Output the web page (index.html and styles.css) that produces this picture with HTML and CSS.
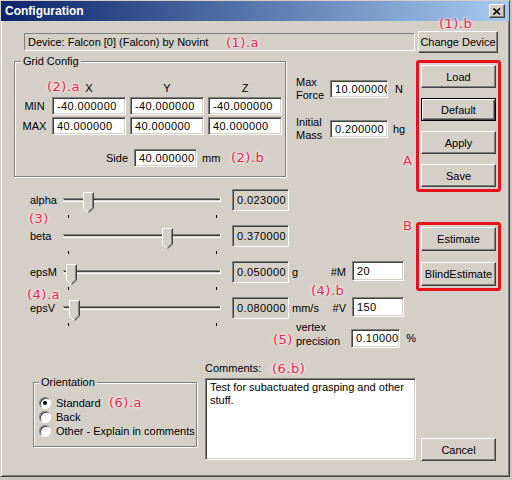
FILE: index.html
```html
<!doctype html>
<html lang="en">

<head>
  <title>Configuration</title>
  <meta charset="utf-8">
  <meta name="viewport" content="width=device-width, initial-scale=1">
  <link rel="stylesheet" href="styles.css">
</head>

<body>
  <!-- shared slider parts -->
  <svg class="defs" width="0" height="0">
    <defs>
      <g id="track">
        <path d="M1 9.5H159" stroke="#808080" />
        <path d="M2 10.5H158" stroke="#404040" />
        <path d="M1 12.5H159" stroke="#ffffff" />
        <path d="M158.5 9V13" stroke="#ffffff" />
        <path d="M6.5 26v3M154.5 26v3" stroke="#000000" />
      </g>
      <g id="thumb">
        <polygon points="0,0 11,0 11,16 5.5,21 0,16" fill="#d4d0c8" />
        <polyline points="0.5,16 0.5,0.5 10.5,0.5" fill="none" stroke="#ffffff" />
        <polyline points="0.5,16.2 5.5,20.6" fill="none" stroke="#ffffff" />
        <polyline points="10.5,0.5 10.5,16.2 5.5,20.6" fill="none" stroke="#404040" />
        <polyline points="9.5,1.5 9.5,15.8 5.5,19.4" fill="none" stroke="#808080" />
      </g>
    </defs>
  </svg>

  <div class="window">
    <div class="titlebar">
      <span class="title">Configuration</span>
      <span class="close">
        <svg width="8" height="7" viewBox="0 0 8 7">
          <path d="M0.5 0.5L7 6.5M7 0.5L0.5 6.5" stroke="#000" stroke-width="1.6" />
        </svg>
      </span>
    </div>

    <div class="client">
      <div class="device-row">
        <div class="device">Device: Falcon [0] (Falcon) by Novint</div>
        <button class="btn change">Change Device</button>
      </div>

      <div class="main">
        <div class="left">
          <div class="top-area">
            <fieldset class="group grid">
              <legend>Grid Config</legend>
              <div class="grid-table">
                <span></span>
                <span class="axis">X</span>
                <span class="axis">Y</span>
                <span class="axis">Z</span>
                <span class="row-label">MIN</span>
                <div class="field">-40.000000</div>
                <div class="field">-40.000000</div>
                <div class="field">-40.000000</div>
                <span class="row-label">MAX</span>
                <div class="field">40.000000</div>
                <div class="field">40.000000</div>
                <div class="field">40.000000</div>
              </div>
              <div class="side-row">
                <span>Side</span>
                <div class="field">40.000000</div>
                <span class="side-unit">mm</span>
              </div>
            </fieldset>

            <div class="physics">
              <div class="phys-row">
                <span class="phys-label">Max<br>Force</span>
                <div class="field">10.000000</div>
                <span class="phys-unit">N</span>
              </div>
              <div class="phys-row">
                <span class="phys-label">Initial<br>Mass</span>
                <div class="field">0.200000</div>
                <span class="phys-unit">hg</span>
              </div>
            </div>
          </div>

          <div class="sliders">
            <div class="slider-row">
              <span class="slider-label">alpha</span>
              <svg class="slider" width="160" height="22"><use href="#track" /><use href="#thumb" x="21" y="3" /></svg>
              <div class="value">0.023000</div>
            </div>
            <div class="slider-row">
              <span class="slider-label">beta</span>
              <svg class="slider" width="160" height="22"><use href="#track" /><use href="#thumb" x="100" y="3" /></svg>
              <div class="value">0.370000</div>
            </div>
            <div class="slider-row">
              <span class="slider-label">epsM</span>
              <svg class="slider" width="160" height="22"><use href="#track" /><use href="#thumb" x="4" y="3" /></svg>
              <div class="value">0.050000</div>
              <span class="value-unit">g</span>
              <span class="count-label">#M</span>
              <div class="field count">20</div>
            </div>
            <div class="slider-row">
              <span class="slider-label">epsV</span>
              <svg class="slider" width="160" height="22"><use href="#track" /><use href="#thumb" x="7" y="3" /></svg>
              <div class="value">0.080000</div>
              <span class="value-unit">mm/s</span>
              <span class="count-label">#V</span>
              <div class="field count">150</div>
            </div>
          </div>

          <div class="vertex-row">
            <span class="vertex-label">vertex<br>precision</span>
            <div class="field">0.10000</div>
            <span class="vertex-unit">%</span>
          </div>

          <div class="bottom-row">
            <fieldset class="group orientation">
              <legend>Orientation</legend>
              <div class="radio-row"><span class="radio checked"></span>Standard</div>
              <div class="radio-row"><span class="radio"></span>Back</div>
              <div class="radio-row"><span class="radio"></span>Other - Explain in comments</div>
            </fieldset>
            <div class="comments">
              <div class="comments-label">Comments:</div>
              <div class="comments-box">Test for subactuated grasping and other<br>stuff.</div>
            </div>
          </div>
        </div>

        <div class="right">
          <div class="redbox">
            <button class="btn">Load</button>
            <button class="btn btn-default">Default</button>
            <button class="btn">Apply</button>
            <button class="btn">Save</button>
          </div>
          <div class="redbox redbox-b">
            <button class="btn">Estimate</button>
            <button class="btn">BlindEstimate</button>
          </div>
          <button class="btn cancel">Cancel</button>
        </div>
      </div>
    </div>

    <!-- red annotations drawn over the dialog -->
    <span class="note note-1a">(1).a</span>
    <span class="note note-1b">(1).b</span>
    <span class="note note-2a">(2).a</span>
    <span class="note note-2b">(2).b</span>
    <span class="note note-3">(3)</span>
    <span class="note note-4a">(4).a</span>
    <span class="note note-4b">(4).b</span>
    <span class="note note-5">(5)</span>
    <span class="note note-6b">(6.b)</span>
    <span class="note note-6a">(6).a</span>
    <span class="note note-a">A</span>
    <span class="note note-b">B</span>
  </div>
</body>

</html>
```

FILE: styles.css
```css
html,
body {
  margin: 0;
  height: 100%;
}

body {
  background-color: #c9c6c0;
  font-family: 'Liberation Sans', Tahoma, Arial, sans-serif;
  font-size: 11px;
  color: #000000;
}

.defs {
  position: absolute;
  width: 0;
  height: 0;
}

.window {
  position: relative;
  width: 510px;
  height: 477px;
  box-sizing: border-box;
  background-color: #d4d0c8;
  border: 1px solid;
  border-color: #d4d0c8 #404040 #404040 #d4d0c8;
  box-shadow: inset 1px 1px #ffffff, inset -1px -1px #808080;
}

.titlebar {
  height: 20px;
  display: flex;
  align-items: center;
  justify-content: space-between;
  padding: 0 4px;
  background: linear-gradient(to right, #0a246a, #a6caf0);
}

.title {
  color: #ffffff;
  font-weight: bold;
  font-size: 12px;
}

.close {
  width: 16px;
  height: 14px;
  box-sizing: border-box;
  background-color: #d4d0c8;
  border: 1px solid;
  border-color: #ffffff #404040 #404040 #ffffff;
  box-shadow: inset -1px -1px #808080;
  display: flex;
  align-items: center;
  justify-content: center;
}

.client {
  padding: 10px 0 0 13px;
}

/* buttons and edit boxes */
.btn {
  box-sizing: border-box;
  width: 75px;
  height: 23px;
  padding: 0;
  background-color: #d4d0c8;
  border: 1px solid;
  border-color: #ffffff #404040 #404040 #ffffff;
  box-shadow: inset -1px -1px #808080;
  font: inherit;
  color: #000000;
}

.btn-default {
  border-color: #000000;
  box-shadow: inset 1px 1px #ffffff, inset -1px -1px #404040, inset -2px -2px #808080;
}

.field {
  box-sizing: border-box;
  height: 18px;
  background-color: #ffffff;
  border: 1px solid;
  border-color: #808080 #ffffff #ffffff #808080;
  box-shadow: inset 1px 1px #404040, inset -1px -1px #d4d0c8;
  padding-left: 4px;
  line-height: 16px;
  letter-spacing: 0.4px;
  white-space: nowrap;
  overflow: hidden;
}

.device-row {
  display: flex;
  align-items: center;
  margin-left: 10px;
}

.device {
  box-sizing: border-box;
  width: 391px;
  height: 18px;
  border: 1px solid;
  border-color: #808080 #ffffff #ffffff #808080;
  padding-left: 3px;
  line-height: 16px;
}

.change {
  width: 80px;
  height: 22px;
  margin-left: 3px;
}

.main {
  display: flex;
  align-items: flex-start;
}

.left {
  width: 402px;
}

/* group boxes */
.group {
  margin: 0;
  min-width: 0;
  box-sizing: border-box;
  border: 1px solid #808080;
  box-shadow: inset 1px 1px #ffffff, 1px 1px #ffffff;
}

.group legend {
  padding: 0 2px;
  line-height: 13px;
  background-color: #d4d0c8;
}

.top-area {
  display: flex;
  align-items: flex-start;
}

.grid {
  width: 272px;
  margin-top: 2px;
  padding: 13px 0 9px 6px;
}

.grid-table {
  display: grid;
  grid-template-columns: 27px 74px 74px 74px;
  grid-template-rows: 14px 18px 18px;
  column-gap: 4px;
  row-gap: 2px;
  align-items: center;
}

.axis,
.row-label {
  text-align: center;
}

.side-row {
  display: flex;
  align-items: center;
  height: 18px;
  margin-top: 14px;
  padding-left: 85px;
}

.side-row .field {
  width: 63px;
  margin-left: 6px;
}

.side-unit {
  margin-left: 5px;
}

.physics {
  margin: 23px 0 0 10px;
}

.phys-row {
  display: flex;
  align-items: center;
}

.phys-row+.phys-row {
  margin-top: 14px;
}

.phys-label {
  width: 34px;
  line-height: 13px;
}

.phys-row .field {
  width: 58px;
}

.phys-unit {
  width: 22px;
  text-align: center;
}

/* sliders */
.sliders {
  display: flex;
  flex-direction: column;
  gap: 14px;
  margin-top: 12px;
}

.slider-row {
  display: flex;
  align-items: center;
  height: 22px;
  padding-left: 16px;
}

.slider-label {
  width: 32px;
}

.slider {
  overflow: visible;
  flex-shrink: 0;
}

.value {
  box-sizing: border-box;
  width: 57px;
  height: 22px;
  margin-left: 10px;
  border: 1px solid;
  border-color: #808080 #ffffff #ffffff #808080;
  box-shadow: inset 1px 1px #404040, inset -1px -1px #d4d0c8;
  padding-left: 4px;
  line-height: 20px;
  letter-spacing: 0.4px;
}

.value-unit {
  width: 30px;
  margin-left: 3px;
}

.count-label {
  width: 24px;
  text-align: right;
}

.field.count {
  width: 52px;
  height: 20px;
  line-height: 18px;
  margin: 0 0 3px 6px;
}

.vertex-row {
  display: flex;
  align-items: flex-start;
  margin-top: 1px;
  padding-left: 282px;
}

.vertex-label {
  width: 57px;
  line-height: 14px;
}

.vertex-row .field {
  width: 51px;
  height: 19px;
  margin-top: 9px;
  line-height: 17px;
}

.vertex-unit {
  margin: 9px 0 0 6px;
  line-height: 19px;
}

/* orientation and comments */
.bottom-row {
  display: flex;
  align-items: flex-start;
}

.orientation {
  width: 164px;
  margin: 28px 0 0 19px;
  padding: 7px 0 8px 5px;
}

.radio-row {
  display: flex;
  align-items: center;
  height: 14px;
}

.radio {
  width: 12px;
  height: 12px;
  box-sizing: border-box;
  margin-right: 5px;
  border-radius: 50%;
  background-color: #ffffff;
  border: 1px solid;
  border-color: #808080 #ffffff #ffffff #808080;
  box-shadow: inset 1px 1px #404040;
  display: flex;
  align-items: center;
  justify-content: center;
}

.radio.checked::after {
  content: '';
  width: 4px;
  height: 4px;
  border-radius: 50%;
  background-color: #000000;
}

.comments {
  margin: 14px 0 0 8px;
}

.comments-label {
  line-height: 13px;
}

.comments-box {
  box-sizing: border-box;
  width: 211px;
  height: 82px;
  margin-top: 3px;
  padding: 2px 4px;
  background-color: #ffffff;
  border: 1px solid;
  border-color: #808080 #ffffff #ffffff #808080;
  box-shadow: inset 1px 1px #404040, inset -1px -1px #d4d0c8;
  line-height: 13px;
}

/* right button column */
.right {
  width: 85px;
  margin-top: 7px;
}

.redbox {
  display: flex;
  flex-direction: column;
  gap: 10px;
  padding: 2px;
  border: 3px solid #e8101a;
  border-radius: 3px;
}

.redbox-b {
  margin-top: 30px;
  gap: 11px;
}

.redbox-b .btn {
  height: 24px;
}

.cancel {
  margin: 147px 0 0 5px;
}

/* annotations */
.note {
  position: absolute;
  font-family: 'DejaVu Sans', sans-serif;
  font-size: 13px;
  line-height: 14px;
  letter-spacing: 0.5px;
  color: #e0284a;
  text-shadow: 0 0 2px #ffffff, 0 0 3px #fbd6dd, 0 0 4px #fbd6dd;
}

.note-1a { left: 225px; top: 35px; }
.note-1b { left: 438px; top: 16px; }
.note-2a { left: 46px; top: 79px; }
.note-2b { left: 230px; top: 150px; }
.note-3 { left: 28px; top: 211px; }
.note-4a { left: 26px; top: 287px; }
.note-4b { left: 310px; top: 283px; }
.note-5 { left: 272px; top: 332px; }
.note-6b { left: 271px; top: 361px; }
.note-6a { left: 108px; top: 395px; }
.note-a { left: 402px; top: 153px; }
.note-b { left: 402px; top: 218px; }
```
